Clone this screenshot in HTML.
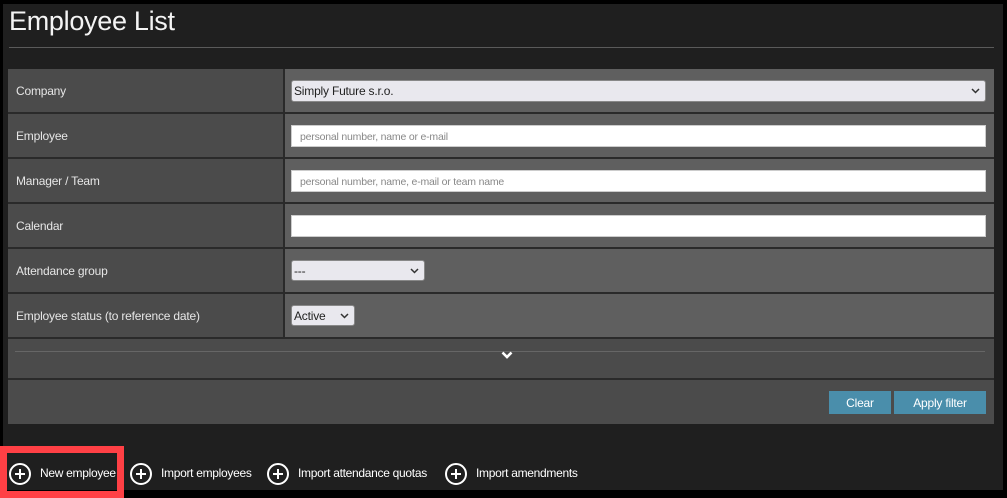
<!DOCTYPE html>
<html><head><meta charset="utf-8"><style>
*{box-sizing:border-box;margin:0;padding:0}
body{width:1007px;height:494px;background:#000;font-family:"Liberation Sans",sans-serif;overflow:hidden;position:relative}
.bg{position:absolute;left:3px;top:4px;width:1000px;height:486px;background:#1f1f1f}
.title{position:absolute;left:9px;top:6px;color:#f4f4f4;font-size:27px;font-weight:normal;letter-spacing:-0.3px}
.hr{position:absolute;left:9px;top:47px;width:985px;height:1px;background:#5a5a5a}
.panel{position:absolute;left:8px;top:69px;width:986px;height:355px;background:#4b4b4b}
.row{position:absolute;left:0;width:986px;height:45px;border-bottom:2px solid #2a2a2a}
.lab{position:absolute;left:0;top:0;width:275px;height:43px;color:#e6e6e6;font-size:12px;padding:15px 0 0 8px;letter-spacing:-0.2px}
.val{position:absolute;left:275px;top:0;width:711px;height:43px;background:#5f5f5f;border-left:2px solid #2a2a2a}
.inp{position:absolute;left:6px;top:11px;height:22px;background:#fff;border:1px solid #ccc;font-size:10.5px;color:#888;padding:5px 0 0 8px;letter-spacing:-0.2px}
.sel{position:absolute;left:6px;top:11px;height:21px;background:#e9e8ee;border:1px solid #888;border-radius:3px;font-size:12px;color:#222;padding:3px 0 0 2px;letter-spacing:-0.2px}
.chev{position:absolute;right:5px;top:7px;width:9px;height:6px}
.btn{position:absolute;top:322px;height:23px;background:#4a8eab;color:#fff;font-size:12px;text-align:center;line-height:24px;letter-spacing:-0.2px}
.links{position:absolute;top:461px;left:9px;color:#fff;font-size:12px;letter-spacing:-0.3px}
.lk{position:absolute;top:0;white-space:nowrap;height:24px;line-height:24px}
.circ{display:inline-block;width:22px;height:22px;border:2px solid #fff;border-radius:50%;vertical-align:middle;position:relative;margin-right:9px}
.circ:before{content:"";position:absolute;left:4px;top:8px;width:10px;height:2px;background:#fff}
.circ:after{content:"";position:absolute;left:8px;top:4px;width:2px;height:10px;background:#fff}
.red{position:absolute;left:0;top:446px;width:124px;height:52px;border:7px solid #ff4045}
</style></head><body>
<div class="bg"></div>
<div class="title">Employee List</div>
<div class="hr"></div>
<div class="panel">
 <div class="row" style="top:0"><div class="lab">Company</div><div class="val"><div class="sel" style="width:695px;height:22px">Simply Future s.r.o.<svg class="chev" viewBox="0 0 9 6"><path d="M1 1l3.5 3.5L8 1" fill="none" stroke="#333" stroke-width="1.5"/></svg></div></div></div>
 <div class="row" style="top:45px"><div class="lab">Employee</div><div class="val"><div class="inp" style="width:695px">personal number, name or e-mail</div></div></div>
 <div class="row" style="top:90px"><div class="lab">Manager / Team</div><div class="val"><div class="inp" style="width:695px">personal number, name, e-mail or team name</div></div></div>
 <div class="row" style="top:135px"><div class="lab">Calendar</div><div class="val"><div class="inp" style="width:695px"></div></div></div>
 <div class="row" style="top:180px"><div class="lab">Attendance group</div><div class="val"><div class="sel" style="width:134px">---<svg class="chev" viewBox="0 0 9 6"><path d="M1 1l3.5 3.5L8 1" fill="none" stroke="#333" stroke-width="1.5"/></svg></div></div></div>
 <div class="row" style="top:225px"><div class="lab">Employee status (to reference date)</div><div class="val"><div class="sel" style="width:64px">Active<svg class="chev" viewBox="0 0 9 6"><path d="M1 1l3.5 3.5L8 1" fill="none" stroke="#333" stroke-width="1.5"/></svg></div></div></div>
 <div style="position:absolute;left:7px;top:282px;width:970px;height:1px;background:#666"></div>
 <svg style="position:absolute;left:493px;top:282px" width="12" height="8" viewBox="0 0 12 8"><path d="M1.5 1.5l4.5 4.5 4.5-4.5" fill="none" stroke="#fff" stroke-width="2.6"/></svg>
 <div style="position:absolute;left:0;top:309px;width:986px;height:2px;background:#2a2a2a"></div>
 <div class="btn" style="left:821px;width:62px">Clear</div>
 <div class="btn" style="left:886px;width:92px">Apply filter</div>
</div>
<div class="links">
 <div class="lk" style="left:0"><span class="circ"></span>New employee</div>
 <div class="lk" style="left:121px"><span class="circ"></span>Import employees</div>
 <div class="lk" style="left:258px"><span class="circ"></span>Import attendance quotas</div>
 <div class="lk" style="left:436px"><span class="circ"></span>Import amendments</div>
</div>
<div class="red"></div>
</body></html>
